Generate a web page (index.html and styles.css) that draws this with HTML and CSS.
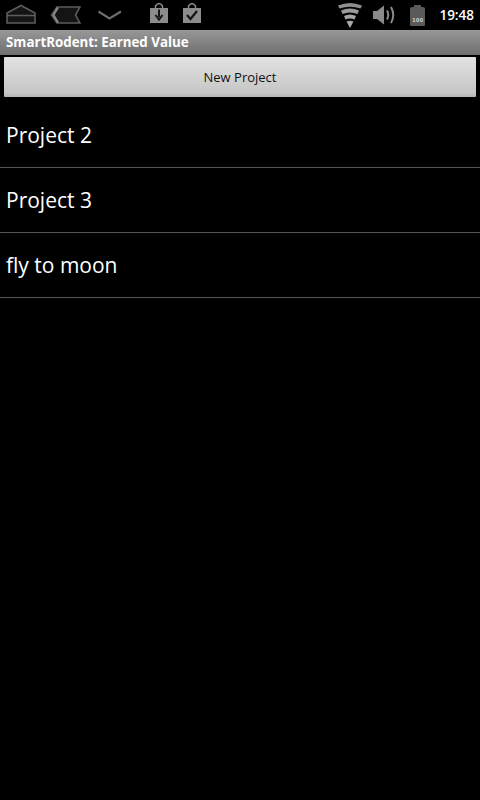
FILE: index.html
```html
<!DOCTYPE html>
<html lang="en">
<head>
    <meta charset="UTF-8">
    <meta name="viewport" content="width=device-width, initial-scale=1.0">
    <title>SmartRodent: Earned Value</title>
    <link rel="stylesheet" href="styles.css">
</head>
<body>
    <!-- Status bar -->
    <div class="status-bar">
        <div class="nav-icons">
            <svg class="icon" width="42" height="30" viewBox="0 0 42 30">
                <path d="M7 13 L21 5.500 L35 13 V23 H7 Z M7 15.500 H35" fill="#141414" stroke="#5c5c5c" stroke-width="1.600"/>
            </svg>
            <svg class="icon back" width="32" height="30" viewBox="0 0 32 30">
                <path d="M8 7 H31 L26.500 15 L31 23 H8 L2.500 15 Z" fill="#141414" stroke="#5c5c5c" stroke-width="1.600"/>
                <path d="M9 7.500 L4.500 15 L9 22.500" fill="none" stroke="#8a8a8a" stroke-width="2"/>
            </svg>
            <svg class="icon down" width="28" height="30" viewBox="0 0 28 30">
                <path d="M2.500 11.500 L13.500 18.500 L25 11.500" fill="none" stroke="#6c6c6c" stroke-width="2.200"/>
            </svg>
        </div>
        <div class="notify-icons">
            <svg class="icon" width="20" height="30" viewBox="0 0 20 30">
                <path d="M6.500 8 V6 Q10 1 13.500 6 V8" fill="none" stroke="#8c8c8c" stroke-width="1.500"/>
                <rect x="1" y="8" width="18" height="15" fill="#8c8c8c"/>
                <path d="M10 9.500 V17 M6.500 15 L10 19.500 L13.500 15" fill="none" stroke="#141414" stroke-width="2"/>
            </svg>
            <svg class="icon" width="20" height="30" viewBox="0 0 20 30">
                <path d="M6.500 8 V6 Q10 1 13.500 6 V8" fill="none" stroke="#8c8c8c" stroke-width="1.500"/>
                <rect x="1" y="8" width="18" height="15" fill="#8c8c8c"/>
                <path d="M5 15 L8.500 19 L15 11" fill="none" stroke="#141414" stroke-width="2.200"/>
            </svg>
        </div>
        <div class="status-right">
            <svg class="icon" width="26" height="30" viewBox="0 0 26 30">
                <path d="M1 5.500 Q13 0.500 25 5.500 L23.500 8.500 Q13 5 2.500 8.500 Z" fill="#8e8e8e"/>
                <path d="M4 10.500 Q13 6.500 22 10.500 L20.500 14 Q13 11 5.500 14 Z" fill="#9a9a9a"/>
                <path d="M7 16 Q13 13 19 16 L17.500 19.500 Q13 17.500 8.500 19.500 Z" fill="#a4a4a4"/>
                <path d="M9.500 21.500 Q13 20 16.500 21.500 L13 28 Z" fill="#a8a8a8"/>
            </svg>
            <svg class="icon speaker" width="24" height="30" viewBox="0 0 24 30">
                <path d="M1 11 H5 L12 5.500 V24.500 L5 19 H1 Z" fill="#8a8a8a"/>
                <path d="M15 10.500 Q17.500 15 15 19.500" fill="none" stroke="#8a8a8a" stroke-width="2"/>
                <path d="M19 7 Q23.500 15 19 23" fill="none" stroke="#8a8a8a" stroke-width="2"/>
            </svg>
            <div class="battery"><span>100</span></div>
            <span class="clock">19:48</span>
        </div>
    </div>

    <div class="title-bar">SmartRodent: Earned Value</div>

    <button class="new-btn">New Project</button>

    <ul class="projects">
        <li>Project 2</li>
        <li>Project 3</li>
        <li>fly to moon</li>
    </ul>
</body>
</html>
```

FILE: styles.css
```css
body {
    font-family: 'Open Sans', sans-serif;
    background-color: #000;
    color: #fff;
    margin: 0;
    padding: 0;
    height: 800px;
    overflow: hidden;
}

/* Status bar */
.status-bar {
    display: flex;
    align-items: center;
    height: 30px;
    background: #000;
}

.icon {
    display: block;
    flex: none;
}

.nav-icons {
    display: flex;
    margin-left: 0;
    width: 149px;
}

.nav-icons .back {
    margin-left: 7px;
}

.nav-icons .down {
    margin-left: 15px;
}

.notify-icons {
    display: flex;
    gap: 13px;
}

.status-right {
    display: flex;
    align-items: center;
    margin-left: auto;
}

.speaker {
    margin-left: 9px;
}

.battery {
    position: relative;
    width: 15px;
    height: 19px;
    margin-top: 3px;
    margin-left: 14px;
    background: #5a5a5a;
    border-radius: 2px 2px 1px 1px;
    display: flex;
    align-items: flex-end;
    justify-content: center;
}

.battery::before {
    content: "";
    position: absolute;
    top: -2px;
    left: 4px;
    width: 7px;
    height: 2px;
    background: #5a5a5a;
}

.battery span {
    font-size: 6px;
    font-weight: 700;
    line-height: 12px;
    letter-spacing: 0.500px;
    color: #ddd;
    font-family: 'Liberation Sans', sans-serif;
}

.clock {
    margin-left: 14px;
    margin-right: 6px;
    font-size: 13.500px;
    font-weight: 600;
    color: #fff;
}

/* Title bar */
.title-bar {
    height: 25px;
    line-height: 25px;
    padding-left: 6px;
    font-size: 13.300px;
    font-weight: 700;
    color: #fff;
    background: linear-gradient(#989898, #6e6e6e);
}

.new-btn {
    display: block;
    box-sizing: border-box;
    width: 472px;
    height: 40px;
    margin: 2px 4px 0;
    padding: 0;
    border: none;
    border-radius: 1px;
    font-family: 'Open Sans', sans-serif;
    font-size: 13px;
    color: #111;
    background: linear-gradient(#e2e2e2, #c6c6c6 90%, #b4b4b4);
}

.projects {
    list-style-type: none;
    padding: 0;
    margin: 6px 0 0;
}

.projects li {
    box-sizing: border-box;
    height: 65px;
    line-height: 65px;
    padding-left: 6px;
    font-size: 21px;
    color: #fff;
    border-bottom: 1px solid #555;
}
```
